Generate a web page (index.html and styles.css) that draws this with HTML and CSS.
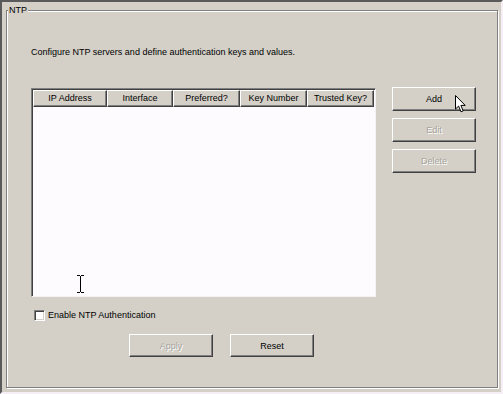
FILE: index.html
```html
<!DOCTYPE html>
<html lang="en">
<head>
    <meta charset="UTF-8">
    <title>NTP</title>
    <link rel="stylesheet" href="styles.css">
</head>
<body>
    <div class="screen">
        <div class="group">
            <span class="group-title">NTP</span>
            <p class="desc">Configure NTP servers and define authentication keys and values.</p>

            <div class="main">
                <div class="list">
                    <div class="list-head">
                        <div class="col">IP Address</div>
                        <div class="col">Interface</div>
                        <div class="col">Preferred?</div>
                        <div class="col">Key Number</div>
                        <div class="col">Trusted Key?</div>
                    </div>
                    <!-- text cursor over the empty list -->
                    <svg class="ibeam" width="7" height="18" viewBox="0 0 7 18">
                        <path d="M0 0.5H3M4 0.5H7M3.5 1V17M0 17.5H3M4 17.5H7" stroke="#000" stroke-width="1" fill="none"/>
                    </svg>
                </div>

                <div class="side-buttons">
                    <button class="btn">Add</button>
                    <button class="btn" disabled>Edit</button>
                    <button class="btn" disabled>Delete</button>
                    <!-- mouse pointer over Add -->
                    <svg class="pointer" width="12" height="18" viewBox="0 0 12 18">
                        <path d="M0.5 0.5V14L3.6 11.1L6 16.8L8.2 15.9L5.9 10.4H10.2Z" fill="#fff" stroke="#000" stroke-width="1" stroke-linejoin="round"/>
                    </svg>
                </div>
            </div>

            <label class="check">
                <span class="box"></span>
                Enable NTP Authentication
            </label>

            <div class="actions">
                <button class="btn btn-wide" disabled>Apply</button>
                <button class="btn btn-wide">Reset</button>
            </div>
        </div>
    </div>
</body>
</html>
```

FILE: styles.css
```css
body {
    margin: 0;
    background-color: #d4d0c8;
    font-family: "Liberation Sans", Arial, sans-serif;
    font-size: 9px;
    color: #000;
}
.screen {
    width: 503px;
    height: 394px;
    box-sizing: border-box;
    border-style: solid;
    border-width: 2px 2px 2px 2px;
    border-color: #5a5a5a #f6f0f6 #f6f0f6 #5a5a5a;
    overflow: hidden;
}
.group {
    position: relative;
    width: 492px;
    height: 378px;
    box-sizing: border-box;
    margin: 8px 0 0 4px;
    padding: 36px 0 0 24px;
    border: 1px solid #808080;
    box-shadow: inset 1px 1px 0 #fff, 1px 1px 0 #fff;
}
.group-title {
    position: absolute;
    top: -7px;
    left: 1px;
    padding: 0 1px;
    line-height: 13px;
    background-color: #d4d0c8;
}
.desc {
    margin: 0;
    line-height: 11px;
}
.main {
    display: flex;
    align-items: flex-start;
    margin-top: 30px;
}
.list {
    position: relative;
    width: 345px;
    height: 209px;
    box-sizing: border-box;
    background-color: #fdfbfd;
    border-style: solid;
    border-width: 1px;
    border-color: #808080 #f4f0f4 #f4f0f4 #808080;
    box-shadow: inset 1px 1px 0 #404040;
    padding: 1px 0 0 1px;
}
.list-head {
    display: grid;
    grid-template-columns: 74px 66px 67px 67px 67px;
}
.col {
    height: 17px;
    box-sizing: border-box;
    line-height: 15px;
    text-align: center;
    background-color: #d4d0c8;
    border: 1px solid;
    border-color: #fff #404040 #404040 #fff;
    box-shadow: inset -1px -1px 0 #808080;
}
.ibeam {
    position: absolute;
    left: 45px;
    top: 186px;
}
.side-buttons {
    position: relative;
    display: flex;
    flex-direction: column;
    gap: 7px;
    margin: -1px 0 0 16px;
}
.btn {
    width: 84px;
    height: 24px;
    padding: 0;
    font-family: inherit;
    font-size: 9px;
    color: #000;
    background-color: #d4d0c8;
    border: 1px solid;
    border-color: #fff #404040 #404040 #fff;
    box-shadow: inset -1px -1px 0 #808080;
    border-radius: 0;
}
.btn:disabled {
    color: #a7a49c;
    text-shadow: 1px 1px 0 #fff;
}
.btn-wide {
    height: 23px;
}
.pointer {
    position: absolute;
    left: 63px;
    top: 8px;
}
.check {
    display: flex;
    align-items: center;
    gap: 3px;
    height: 12px;
    margin: 12px 0 0 3px;
}
.box {
    width: 11px;
    height: 11px;
    box-sizing: border-box;
    background-color: #fff;
    border: 1px solid;
    border-color: #808080 #fff #fff #808080;
    box-shadow: inset 1px 1px 0 #404040, inset -1px -1px 0 #d4d0c8;
}
.actions {
    display: flex;
    gap: 17px;
    margin: 13px 0 0 98px;
}
```
